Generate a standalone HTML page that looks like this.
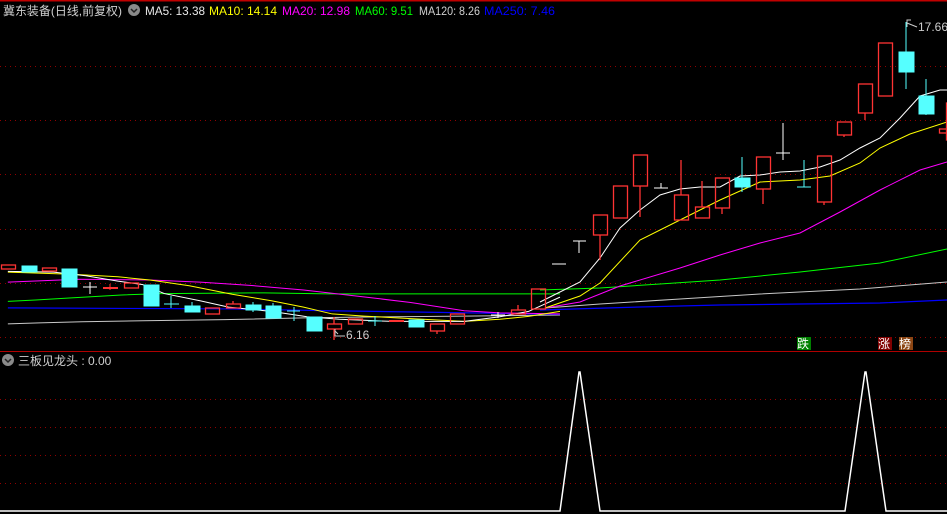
<!DOCTYPE html>
<html><head><meta charset="utf-8"><style>
html,body{margin:0;padding:0;background:#000;width:947px;height:514px;overflow:hidden}
svg{display:block}
text{font-family:"Liberation Sans","Noto Sans CJK SC",sans-serif;font-size:12px}
</style></head><body>
<svg width="947" height="514" viewBox="0 0 947 514" xmlns="http://www.w3.org/2000/svg">
<rect width="947" height="514" fill="#000"/>
<line x1="0" y1="0.5" x2="947" y2="0.5" stroke="#c00000" stroke-width="2"/>
<line x1="0" y1="351.5" x2="947" y2="351.5" stroke="#b00000" stroke-width="1"/>
<g stroke="#900000" stroke-width="1" stroke-dasharray="1,4">
<line x1="0" y1="66.5" x2="947" y2="66.5"/><line x1="0" y1="120.5" x2="947" y2="120.5"/>
<line x1="0" y1="174.5" x2="947" y2="174.5"/><line x1="0" y1="229.5" x2="947" y2="229.5"/>
<line x1="0" y1="283.5" x2="947" y2="283.5"/><line x1="0" y1="337.5" x2="947" y2="337.5"/>
<line x1="0" y1="399.5" x2="947" y2="399.5"/><line x1="0" y1="427.5" x2="947" y2="427.5"/>
<line x1="0" y1="455.5" x2="947" y2="455.5"/><line x1="0" y1="483.5" x2="947" y2="483.5"/>
</g>
<!-- header -->
<text x="3" y="15" fill="#d0d0d0" textLength="119" lengthAdjust="spacingAndGlyphs">冀东装备(日线,前复权)</text>
<circle cx="134" cy="10" r="6" fill="#8a8a8a"/><path d="M131 9 L134 12 L137 9" stroke="#222" stroke-width="1.5" fill="none"/>
<text x="145" y="15" fill="#e8e8e8" textLength="60" lengthAdjust="spacingAndGlyphs">MA5: 13.38</text>
<text x="209" y="15" fill="#ffff00" textLength="68" lengthAdjust="spacingAndGlyphs">MA10: 14.14</text>
<text x="282" y="15" fill="#ff00ff" textLength="68" lengthAdjust="spacingAndGlyphs">MA20: 12.98</text>
<text x="355" y="15" fill="#00ff00" textLength="58" lengthAdjust="spacingAndGlyphs">MA60: 9.51</text>
<text x="419" y="15" fill="#d0d0d0" textLength="61" lengthAdjust="spacingAndGlyphs">MA120: 8.26</text>
<text x="484" y="15" fill="#0000ff" textLength="71" lengthAdjust="spacingAndGlyphs">MA250: 7.46</text>

<!-- MA lines left (zoom coords) -->
<g transform="matrix(0.35714,0,0,0.35714,0,240)" fill="none">
<polyline vector-effect="non-scaling-stroke" stroke="#c8c8c8" stroke-width="1" points="22,235 110,232 230,229 400,226 630,223 850,218 1000,216 1300,213 1568,210"/>
<polyline vector-effect="non-scaling-stroke" stroke="#0000ff" stroke-width="1.2" points="22,190 450,192 650,193 920,198 1250,203 1568,208"/>
<polyline vector-effect="non-scaling-stroke" stroke="#00ff00" stroke-width="1" points="22,172 100,168 200,162 340,154 450,150 740,148 920,151 1568,151"/>
<polyline vector-effect="non-scaling-stroke" stroke="#ff00ff" stroke-width="1" points="22,118 220,110 420,112 560,118 700,127 850,140 1000,157 1150,175 1300,198 1400,204 1568,207"/>
<polyline vector-effect="non-scaling-stroke" stroke="#ffff00" stroke-width="1" points="22,90 200,96 330,103 420,112 530,128 650,152 760,170 850,188 930,207 1020,213 1150,220 1300,228 1400,222 1480,214 1568,200"/>
<polyline vector-effect="non-scaling-stroke" stroke="#ffffff" stroke-width="1" points="22,88 150,90 240,100 330,115 400,125 460,150 560,170 640,188 760,200 860,215 950,222 1100,228 1300,228 1400,215 1480,200 1568,160"/>
</g>
<!-- MA lines right -->
<g fill="none" stroke-width="1">
<polyline stroke="#c8c8c8" points="545,308 600,304 680,299 760,294 860,289 947,282"/>
<polyline stroke="#0000ff" stroke-width="1.2" points="540,310 640,307 720,305 800,304 880,303 947,300"/>
<polyline stroke="#00ff00" points="540,290 600,288 660,284 720,280 800,272 880,263 947,249"/>
<polyline stroke="#ff00ff" points="545,308 580,302 620,286 680,268 720,255 760,243 800,233 840,212 880,190 920,170 947,162"/>
<polyline stroke="#ffff00" points="545,308 580,296 600,283 640,240 680,220 720,200 760,182 800,180 830,176 860,163 880,148 910,134 947,122"/>
<polyline stroke="#ffffff" points="540,302 580,282 600,258 620,228 640,210 660,195 680,189 700,187 720,187 740,176 760,175 780,172 800,171 820,167 840,160 860,148 880,138 900,118 920,96 940,90 947,90"/>
</g>
<!-- candles: red hollow -->
<g fill="none" stroke="#ff3333" stroke-width="1.3">
<rect x="1.5" y="265" width="14" height="4"/><rect x="42.5" y="268" width="14" height="3"/>
<rect x="124.5" y="283" width="14" height="5"/><rect x="205.5" y="308" width="14" height="6"/>
<rect x="226.5" y="304" width="14" height="4"/><line x1="233" y1="301" x2="233" y2="304"/>
<rect x="327.5" y="324" width="14" height="5"/><line x1="334" y1="317" x2="334" y2="324"/><line x1="334" y1="329" x2="334" y2="340"/>
<rect x="348.5" y="319" width="14" height="5"/><rect x="430.5" y="324" width="14" height="7"/><line x1="437" y1="331" x2="437" y2="334"/>
<rect x="450.5" y="314" width="14" height="10"/><rect x="511.5" y="310" width="14" height="4"/><line x1="518" y1="305" x2="518" y2="310"/>
<rect x="531.5" y="289" width="14" height="20"/>
<rect x="593.5" y="215" width="14" height="20"/><line x1="600" y1="235" x2="600" y2="260"/>
<rect x="613.5" y="186" width="14" height="32"/>
<rect x="633.5" y="155" width="14" height="31"/><line x1="640" y1="186" x2="640" y2="217"/>
<rect x="674.5" y="195" width="14" height="25"/><line x1="681" y1="160" x2="681" y2="195"/>
<rect x="695.5" y="207" width="14" height="11"/><line x1="702" y1="181" x2="702" y2="207"/>
<rect x="715.5" y="178" width="14" height="30"/><line x1="722" y1="208" x2="722" y2="214"/>
<rect x="756.5" y="157" width="14" height="32"/><line x1="763" y1="189" x2="763" y2="204"/>
<rect x="817.5" y="156" width="14" height="46"/><line x1="824" y1="202" x2="824" y2="205"/>
<rect x="837.5" y="122" width="14" height="13"/><line x1="844" y1="135" x2="844" y2="137"/>
<rect x="858.5" y="84" width="14" height="29"/><line x1="865" y1="113" x2="865" y2="120"/>
<rect x="878.5" y="43" width="14" height="53"/>
<rect x="939.5" y="129" width="10" height="4"/><rect x="946.5" y="103" width="4" height="37"/>
</g>
<g fill="#ff3333"><rect x="103" y="287" width="15" height="2"/><line x1="110" y1="284" x2="110" y2="290" stroke="#ff3333"/><rect x="389" y="320" width="15" height="2"/></g>
<!-- cyan filled -->
<g fill="#55ffff" stroke="#55ffff">
<rect x="22" y="266" width="15" height="6"/><rect x="62" y="269" width="15" height="18"/>
<rect x="144" y="285" width="15" height="21"/><rect x="185" y="306" width="15" height="6"/><line x1="192" y1="302" x2="192" y2="312"/>
<rect x="246" y="305" width="15" height="5"/><line x1="253" y1="302" x2="253" y2="312"/>
<rect x="266" y="306" width="15" height="12"/><line x1="273" y1="303" x2="273" y2="306"/>
<rect x="307" y="317" width="15" height="14"/><rect x="409" y="320" width="15" height="7"/>
<rect x="735" y="178" width="15" height="9"/><line x1="742" y1="157" x2="742" y2="192"/>
<rect x="899" y="52" width="15" height="20"/><line x1="906" y1="22" x2="906" y2="89"/>
<rect x="919" y="96" width="15" height="18"/><line x1="926" y1="79" x2="926" y2="115"/>
</g>
<g stroke="#55ffff" stroke-width="1" fill="none">
<line x1="164" y1="304" x2="179" y2="304"/><line x1="171" y1="296" x2="171" y2="308"/>
<line x1="287" y1="311" x2="300" y2="311"/><line x1="294" y1="307" x2="294" y2="321"/>
<line x1="368" y1="321" x2="382" y2="321"/><line x1="375" y1="316" x2="375" y2="326"/>
<line x1="797" y1="187" x2="811" y2="187"/><line x1="804" y1="160" x2="804" y2="187"/>
</g>
<g stroke="#ffffff" stroke-width="1" fill="none">
<line x1="83" y1="287" x2="97" y2="287"/><line x1="90" y1="282" x2="90" y2="294"/>
<line x1="491" y1="315" x2="505" y2="315"/><line x1="498" y1="312" x2="498" y2="318"/>
<line x1="552" y1="264" x2="566" y2="264"/>
<line x1="573" y1="241" x2="586" y2="241"/><line x1="579" y1="241" x2="579" y2="253"/>
<line x1="654" y1="188" x2="668" y2="188"/><line x1="661" y1="183" x2="661" y2="188"/>
<line x1="776" y1="153" x2="790" y2="153"/><line x1="783" y1="123" x2="783" y2="160"/>
</g>
<!-- labels -->
<path d="M335 329 L335 336 L345 336 M335 331 L338 334" stroke="#cccccc" fill="none"/>
<text x="346" y="339" fill="#cccccc">6.16</text>
<path d="M907 27 L907 20 L911 20 M907 23 L917 27" stroke="#cccccc" fill="none"/>
<text x="918" y="31" fill="#cccccc">17.66</text>
<rect x="797" y="337" width="14" height="13" fill="#008000"/><text x="797" y="348" fill="#fff">跌</text>
<rect x="878" y="337" width="14" height="13" fill="#800000"/><text x="878" y="348" fill="#fff">涨</text>
<rect x="899" y="337" width="14" height="13" fill="#8b4513"/><text x="899" y="348" fill="#fff">榜</text>
<!-- lower panel -->
<circle cx="8" cy="360" r="6" fill="#8a8a8a"/><path d="M5 359 L8 362 L11 359" stroke="#222" stroke-width="1.5" fill="none"/>
<text x="18" y="365" fill="#d0d0d0">三板见龙头 : 0.00</text>
<polyline fill="none" stroke="#ffffff" stroke-width="1.5" points="0,511 560,511 579,372 580,372 600,511 845,511 865,372 866,372 886,511 947,511"/>
</svg>
</body></html>
